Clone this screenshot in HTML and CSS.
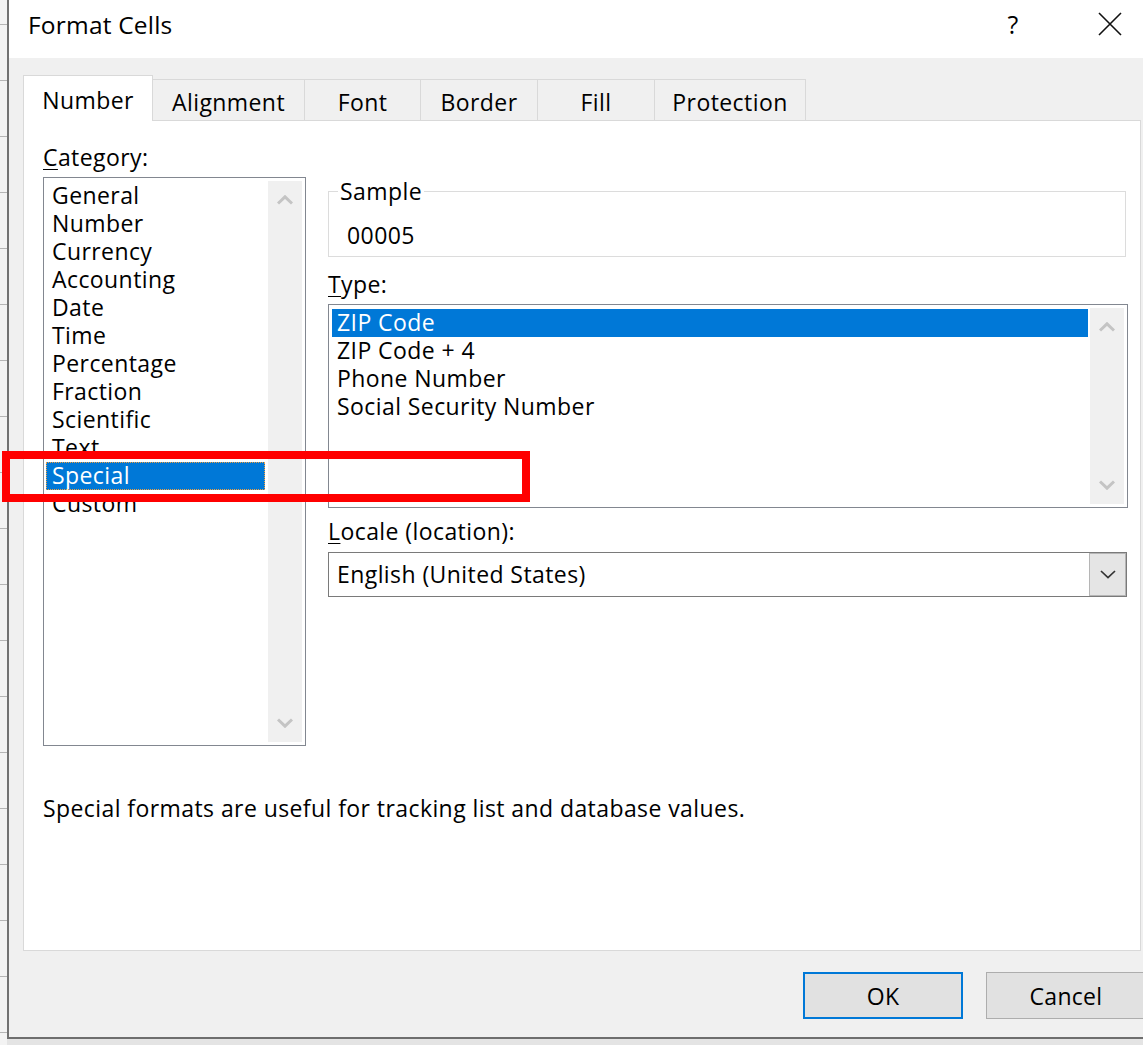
FILE: index.html
```html
<!DOCTYPE html>
<html lang="en">
<head>
<meta charset="utf-8">
<title>Format Cells</title>
<link rel="stylesheet" href="styles.css">
</head>
<body>
<div class="screen">
  <div class="sheet-edge"></div>
  <div class="dialog">
    <div class="titlebar">
      <div class="title">Format Cells</div>
      <div class="controls">
        <div class="ctl help">?</div>
        <div class="ctl close">
          <svg width="24" height="24" viewBox="0 0 24 24"><path d="M1 1 L23 23 M23 1 L1 23" stroke="#111" stroke-width="1.6" fill="none"/></svg>
        </div>
      </div>
    </div>
    <div class="tabs">
      <div class="tab active t-number">Number</div>
      <div class="tab t-align">Alignment</div>
      <div class="tab t-font">Font</div>
      <div class="tab t-border">Border</div>
      <div class="tab t-fill">Fill</div>
      <div class="tab t-prot">Protection</div>
    </div>
    <div class="panel">
      <div class="cols">
        <div class="col-left">
          <div class="label"><u>C</u>ategory:</div>
          <div class="listbox cat">
            <ul class="items">
              <li>General</li>
              <li>Number</li>
              <li>Currency</li>
              <li>Accounting</li>
              <li>Date</li>
              <li>Time</li>
              <li>Percentage</li>
              <li>Fraction</li>
              <li>Scientific</li>
              <li>Text</li>
              <li class="sel focus">Special</li>
              <li>Custom</li>
            </ul>
            <div class="scrollbar">
              <div class="arrow"><svg width="16" height="10" viewBox="0 0 16 10"><path d="M1 8.5 L8 1.8 L15 8.5" stroke="#c4c4c4" stroke-width="3" fill="none"/></svg></div>
              <div class="arrow"><svg width="16" height="10" viewBox="0 0 16 10"><path d="M1 1.5 L8 8.2 L15 1.5" stroke="#c4c4c4" stroke-width="3" fill="none"/></svg></div>
            </div>
          </div>
        </div>
        <div class="col-right">
          <fieldset class="sample">
            <legend>Sample</legend>
            <div class="sample-value">00005</div>
          </fieldset>
          <div class="label type-label"><u>T</u>ype:</div>
          <div class="listbox typelist">
            <ul class="items">
              <li class="sel">ZIP Code</li>
              <li>ZIP Code + 4</li>
              <li>Phone Number</li>
              <li>Social Security Number</li>
            </ul>
            <div class="scrollbar">
              <div class="arrow"><svg width="16" height="10" viewBox="0 0 16 10"><path d="M1 8.5 L8 1.8 L15 8.5" stroke="#c4c4c4" stroke-width="3" fill="none"/></svg></div>
              <div class="arrow"><svg width="16" height="10" viewBox="0 0 16 10"><path d="M1 1.5 L8 8.2 L15 1.5" stroke="#c4c4c4" stroke-width="3" fill="none"/></svg></div>
            </div>
          </div>
          <div class="label locale-label"><u>L</u>ocale (location):</div>
          <div class="combo">
            <div class="combo-text">English (United States)</div>
            <div class="combo-btn"><svg width="16" height="9" viewBox="0 0 16 9"><path d="M1 1 L8 7.5 L15 1" stroke="#333" stroke-width="1.7" fill="none"/></svg></div>
          </div>
        </div>
      </div>
      <p class="desc">Special formats are useful for tracking list and database values.</p>
    </div>
    <div class="footer">
      <button class="btn ok">OK</button>
      <button class="btn">Cancel</button>
    </div>
  </div>
  <div class="redbox"></div>
</div>
</body>
</html>
```
FILE: styles.css
```css
html, body {
  margin: 0;
  padding: 0;
}
body {
  background: #dadada;
  font-family: "Open Sans", "Noto Sans", "Liberation Sans", sans-serif;
  font-size: 23px;
  letter-spacing: 0.42px;
  color: #000;
  overflow: hidden;
}
.screen {
  position: relative;
  width: 1143px;
  height: 1045px;
  display: flex;
  align-items: flex-start;
  overflow: hidden;
  background: linear-gradient(#c8c8c8, #e4e4e4 6px);
}
.sheet-edge {
  flex: none;
  width: 7px;
  height: 1045px;
  background-color: #f3f3f3;
  background-image: repeating-linear-gradient(to bottom, transparent 0, transparent 24px, #b5b5b5 24px, #b5b5b5 25px, transparent 25px, transparent 56px);
}
.dialog {
  flex: none;
  width: 1152px;
  height: 1039px;
  box-sizing: border-box;
  border-left: 2px solid #727272;
  border-bottom: 2px solid #6e6e6e;
  background: #f0f0f0;
}
.titlebar {
  height: 58px;
  background: #fff;
  display: flex;
  padding-left: 19px;
}
.title {
  font-size: 24.5px;
  letter-spacing: 0.2px;
  line-height: 32px;
  padding-top: 9px;
}
.controls {
  margin-left: auto;
  display: flex;
  height: 48px;
}
.ctl {
  display: flex;
  align-items: center;
  justify-content: center;
}
.help {
  width: 96px;
  font-size: 25px;
}
.close {
  width: 98px;
}
.tabs {
  display: flex;
  align-items: flex-end;
  height: 63px;
  padding-left: 14px;
  margin-bottom: -1px;
  position: relative;
  z-index: 1;
}
.tab {
  box-sizing: border-box;
  height: 41px;
  margin-bottom: 1px;
  border-top: 1px solid #d9d9d9;
  border-right: 1px solid #d9d9d9;
  display: flex;
  justify-content: center;
  align-items: center;
  padding-top: 3px;
}
.tab.active {
  height: 46px;
  margin-bottom: 0;
  background: #fff;
  border-left: 1px solid #d9d9d9;
  padding-top: 2px;
}
.t-number { width: 130px; }
.t-align { width: 152px; }
.t-font { width: 116px; }
.t-border { width: 117px; }
.t-fill { width: 117px; }
.t-prot { width: 151px; }
.panel {
  margin: 0 18px 0 14px;
  background: #fff;
  border: 1px solid #d9d9d9;
  height: 831px;
  box-sizing: border-box;
  padding: 22px 12px 0 19px;
}
.cols {
  display: flex;
  gap: 22px;
}
.col-left {
  width: 263px;
  flex: none;
}
.col-right {
  width: 800px;
  flex: none;
  padding-top: 34px;
}
.label {
  line-height: 28px;
}
.label u {
  text-underline-offset: 3px;
  text-decoration-thickness: 1px;
}
.listbox {
  border: 1px solid #828790;
  background: #fff;
  display: flex;
  box-sizing: border-box;
}
.cat {
  margin-top: 6px;
  height: 569px;
}
.items {
  flex: 1;
  list-style: none;
  margin: 0;
  padding: 4px 3px 0 2px;
}
.items li {
  line-height: 27px;
  height: 28px;
  padding-left: 6px;
  white-space: nowrap;
}
.items li.sel {
  background: #0078d7;
  color: #fff;
}
.items li.focus {
  outline: 1px dotted #f0a040;
  outline-offset: -1px;
}
.scrollbar {
  flex: none;
  width: 34px;
  margin: 3px 3px 3px 0;
  background: #f0f0f0;
  display: flex;
  flex-direction: column;
  justify-content: space-between;
}
.arrow {
  height: 38px;
  display: flex;
  align-items: center;
  justify-content: center;
}
.sample {
  margin: 0 2px 0 0;
  border: 1px solid #dcdcdc;
  padding: 16px 18px 7px;
  min-width: 0;
}
.sample legend {
  padding: 0 2px;
  margin-left: -9px;
  line-height: 28px;
}
.sample-value {
  line-height: 28px;
}
.type-label {
  margin-top: 13px;
}
.typelist {
  margin-top: 6px;
  height: 204px;
}
.typelist .items {
  padding: 4px 2px 0 3px;
}
.typelist .items li {
  padding-left: 5px;
}
.locale-label {
  margin-top: 9px;
}
.combo {
  margin-top: 7px;
  width: 799px;
  height: 45px;
  box-sizing: border-box;
  border: 1px solid #7a7a7a;
  background: #fff;
  display: flex;
}
.combo-text {
  flex: 1;
  padding-left: 8px;
  line-height: 43px;
}
.combo-btn {
  width: 37px;
  box-sizing: border-box;
  background: #e5e5e5;
  border: 1px solid #b5b5b5;
  display: flex;
  align-items: center;
  justify-content: center;
}
.desc {
  margin: 48px 0 0;
  line-height: 28px;
}
.footer {
  display: flex;
  justify-content: flex-end;
  gap: 23px;
  padding: 21px 13px 0 0;
}
.btn {
  width: 160px;
  height: 47px;
  box-sizing: border-box;
  background: #e1e1e1;
  border: 1px solid #adadad;
  font-family: inherit;
  font-size: 23px;
  letter-spacing: 0.3px;
  color: #000;
  padding: 0;
}
.btn.ok {
  border: 2px solid #0078d7;
}
.redbox {
  position: absolute;
  left: 2px;
  top: 451px;
  width: 528px;
  height: 51px;
  box-sizing: border-box;
  border: 8px solid #ff0000;
}
```
